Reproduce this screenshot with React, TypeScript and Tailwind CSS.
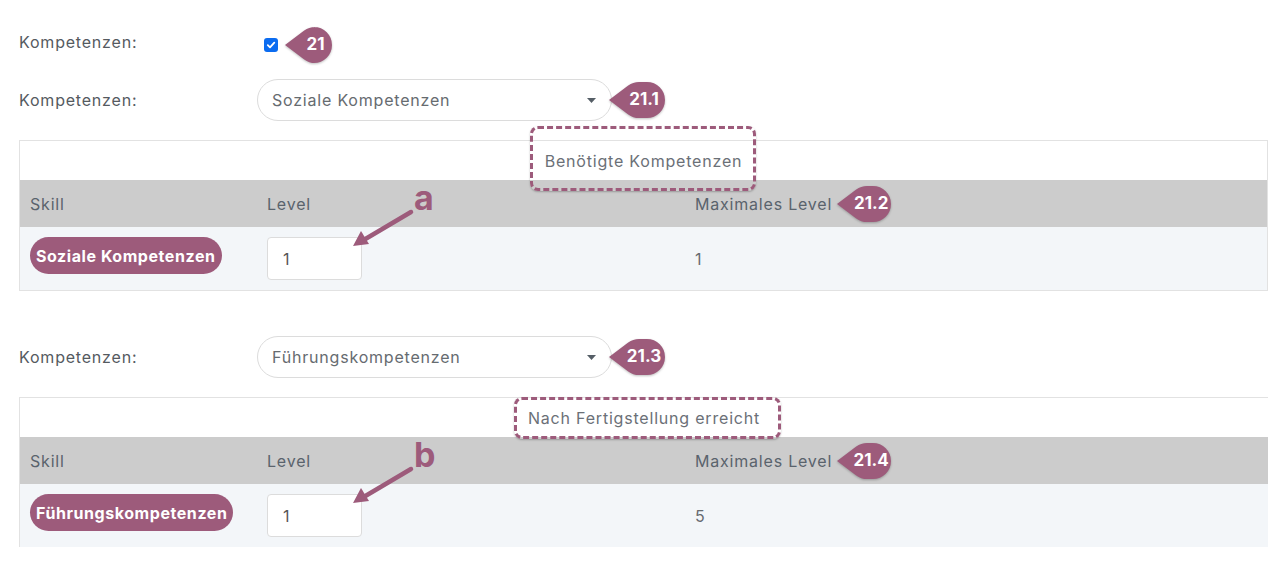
const PLUM = '#9d5b7b';

const Badge = ({ label, width }: { label: string; width: number }) => {
    const h = 36;
    const r = h / 2;
    const tip = 12;
    const cx = tip + r;
    const d = cx;
    const tx = cx - (r * r) / d;
    const sin = Math.sqrt(1 - (r / d) * (r / d));
    const ty1 = r - r * sin;
    const ty2 = r + r * sin;
    const path = `M0 ${r} L${tx} ${ty1} A${r} ${r} 0 0 1 ${cx} 0 L${width - r} 0 A${r} ${r} 0 0 1 ${width - r} ${h} L${cx} ${h} A${r} ${r} 0 0 1 ${tx} ${ty2} Z`;
    return (
        <span className="relative inline-flex shrink-0 items-center justify-center" style={{ width, height: h }}>
            <svg className="absolute inset-0 drop-shadow-[0_1px_1px_rgba(0,0,0,0.25)]" width={width} height={h} viewBox={`0 0 ${width} ${h}`}>
                <path d={path} fill={PLUM} />
            </svg>
            <span className="relative pl-[14px] text-[17px] font-bold tracking-normal text-white">{label}</span>
        </span>
    );
};

const Select = ({ value }: { value: string }) => (
    <div className="flex h-[42px] w-[355px] items-center justify-between rounded-full border border-[#dcdcdc] bg-white pl-[14px] pr-[15px] text-[16px] text-[#666b70]">
        <span>{value}</span>
        <svg width="9" height="5" viewBox="0 0 9 5">
            <path d="M0 0 L9 0 L4.5 5 Z" fill="#555e66" />
        </svg>
    </div>
);

const SkillTable = ({
    caption,
    captionBox,
    skill,
    max,
    badge,
    bordered,
}: {
    caption: string;
    captionBox: string;
    skill: string;
    max: string;
    badge: string;
    bordered: boolean;
}) => (
    <div className={`mt-[19px] w-full ${bordered ? 'border border-[#e2e2e2]' : 'border-t border-l border-[#e2e2e2]'}`}>
        <div className="flex h-[39px] items-center justify-center bg-white">
            <span className="relative text-[16px] text-[#6b7077]">
                {caption}
                <span className={`absolute rounded-[8px] border-[3px] border-dashed border-[#9d5b7b] shadow-[0_1px_2px_rgba(0,0,0,0.25)] ${captionBox}`} />
            </span>
        </div>
        <div className="flex h-[47px] items-center bg-[#cccccc] pt-[1px] text-[16px] text-[#5a636c]">
            <div className="w-[237px] pl-[10px]">Skill</div>
            <div className="w-[428px] pl-[10px]">Level</div>
            <div className="flex items-center pl-[10px]">
                <span>Maximales Level</span>
                <span className="ml-[5px]">
                    <Badge label={badge} width={54} />
                </span>
            </div>
        </div>
        <div className="flex h-[63px] items-center bg-[#f3f6f9] text-[16px] text-[#666b70]">
            <div className="w-[237px] pl-[10px]">
                <span className="inline-flex h-[37px] -translate-y-[3px] items-center rounded-full bg-[#9d5b7b] px-[6px] text-[16px] font-bold tracking-[0.035em] text-white">
                    {skill}
                </span>
            </div>
            <div className="w-[428px] pl-[10px]">
                <div className="flex h-[43px] w-[95px] items-center rounded-[4px] border border-[#dcdcdc] bg-white pl-[15px] text-[#555]">
                    1
                </div>
            </div>
            <div className="pl-[10px]">{max}</div>
        </div>
    </div>
);

const Arrow = ({ letter, top }: { letter: string; top: number }) => (
    <div className="absolute left-[348px]" style={{ top }}>
        <svg width="70" height="60" viewBox="0 0 70 60">
            <line x1="63" y1="14" x2="14" y2="43" stroke={PLUM} strokeWidth="4.5" strokeLinecap="round" />
            <path d="M5 48 L13 33 L21 46 Z" fill={PLUM} />
        </svg>
        <span className="absolute left-[66px] top-[-17px] text-[34px] font-bold leading-none tracking-normal text-[#9d5b7b]">{letter}</span>
    </div>
);

export default function App() {
    return (
        <div className="relative min-h-[574px] bg-white pl-[19px] pr-[17px] font-['Inter',sans-serif] tracking-[0.05em]">
            <div className="box-content flex h-[40px] items-center pt-[22px]">
                <div className="w-[238px] text-[16px] text-[#555a5f]">Kompetenzen:</div>
                <div className="mt-[5px] flex items-center">
                    <span className="ml-[7px] flex h-[14px] w-[14px] items-center justify-center rounded-[3px] bg-[#0b6cf0]">
                        <svg width="10" height="10" viewBox="0 0 10 10">
                            <path d="M1.8 5.2 L4 7.3 L8.3 2.6" stroke="white" strokeWidth="1.8" fill="none" strokeLinecap="round" strokeLinejoin="round" />
                        </svg>
                    </span>
                    <span className="ml-[7px]">
                        <Badge label="21" width={47} />
                    </span>
                </div>
            </div>

            <div className="mt-[17px] flex items-center">
                <div className="w-[238px] text-[16px] text-[#555a5f]">Kompetenzen:</div>
                <Select value="Soziale Kompetenzen" />
                <span className="-ml-[3px]">
                    <Badge label="21.1" width={56} />
                </span>
            </div>

            <SkillTable
                caption="Benötigte Kompetenzen"
                captionBox="-left-[15px] -right-[14px] -top-[23px] -bottom-[18px]"
                skill="Soziale Kompetenzen"
                max="1"
                badge="21.2"
                bordered
            />

            <div className="mt-[45px] flex items-center">
                <div className="w-[238px] text-[16px] text-[#555a5f]">Kompetenzen:</div>
                <Select value="Führungskompetenzen" />
                <span className="-ml-[3px]">
                    <Badge label="21.3" width={56} />
                </span>
            </div>

            <SkillTable
                caption="Nach Fertigstellung erreicht"
                captionBox="-left-[14px] -right-[21px] -top-[9px] -bottom-[9px]"
                skill="Führungskompetenzen"
                max="5"
                badge="21.4"
                bordered={false}
            />

            <Arrow letter="a" top={198} />
            <Arrow letter="b" top={455} />
        </div>
    );
}
